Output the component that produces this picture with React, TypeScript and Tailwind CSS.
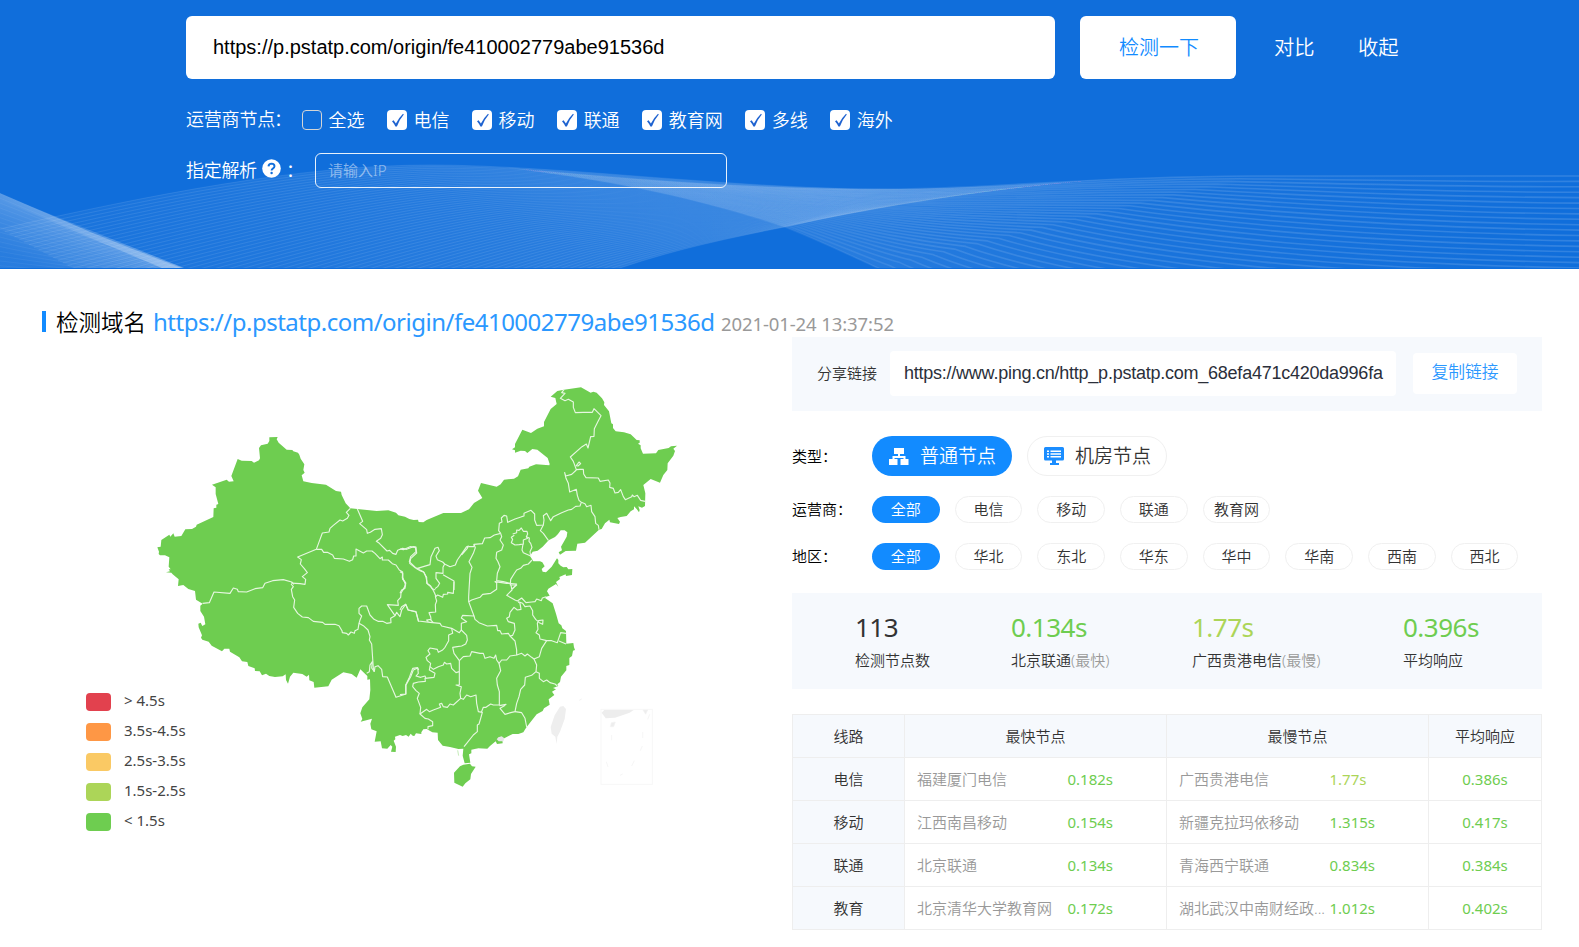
import React from "react";

type Pt = [number, number];
type Segment = { dx: number; dy: number; points: string };

const UI = "font-['Noto_Sans','Noto_Sans_CJK_SC',sans-serif]";
const ARIAL = "font-['Liberation_Sans','Noto_Sans_CJK_SC',sans-serif]";

/* ---------- header waves ---------- */

const sheetA: [Pt[], Pt[]] = [
  [[0, 229], [150, 195], [300, 165], [430, 165], [560, 165], [740, 190], [900, 189], [1000, 188], [1080, 180], [1130, 178]],
  [[300, 390], [450, 340], [560, 290], [620, 268], [680, 248], [730, 238], [785, 227], [870, 208], [1000, 185], [1130, 178]],
];
const sheetB: [Pt[], Pt[]] = [
  [[500, 167], [640, 180], [760, 190], [900, 189], [1000, 188], [1080, 177], [1250, 176], [1400, 176], [1500, 177], [1579, 176]],
  [[500, 167], [600, 178], [700, 198], [785, 227], [830, 245], [860, 260], [878, 268], [980, 320], [1200, 350], [1579, 360]],
];
const sheetC: [Pt[], Pt[]] = [
  [[-10, 189], [30, 206], [60, 219], [90, 232], [120, 244], [150, 256], [184, 269], [190, 272], [195, 274], [200, 276]],
  [[-10, 300], [10, 296], [30, 292], [60, 290], [90, 290], [120, 290], [150, 290], [170, 290], [190, 290], [200, 290]],
];

function mix([a, b]: [Pt[], Pt[]], t: number): Pt[] {
  return a.map((p, i) => [p[0] + (b[i][0] - p[0]) * t, p[1] + (b[i][1] - p[1]) * t] as Pt);
}
function curve(p: Pt[]): string {
  const s = p.map((q) => q[0].toFixed(1) + " " + q[1].toFixed(1));
  return `M${s[0]}C${s.slice(1).join(" ")}`;
}
function area([a, b]: [Pt[], Pt[]]): string {
  return curve(a) + "L" + curve([...b].reverse()).slice(1) + "Z";
}
function Lines({ sheet, n, stroke, w = 1 }: { sheet: [Pt[], Pt[]]; n: number; stroke: string; w?: number }) {
  return (
    <g fill="none" stroke={stroke} strokeWidth={w}>
      {Array.from({ length: n + 1 }, (_, i) => (
        <path key={i} d={curve(mix(sheet, i / n))} />
      ))}
    </g>
  );
}

function Waves() {
  return (
    <svg className="absolute inset-0" width="1579" height="268" viewBox="0 0 1579 268">
      <defs>
        <linearGradient id="ga" gradientUnits="userSpaceOnUse" x1="0" y1="0" x2="1130" y2="0">
          <stop offset="0" stopColor="#fff" stopOpacity="0.03" />
          <stop offset="0.35" stopColor="#fff" stopOpacity="0.08" />
          <stop offset="0.75" stopColor="#fff" stopOpacity="0.13" />
          <stop offset="1" stopColor="#fff" stopOpacity="0.04" />
        </linearGradient>
        <linearGradient id="gb" gradientUnits="userSpaceOnUse" x1="500" y1="0" x2="1579" y2="0">
          <stop offset="0" stopColor="#fff" stopOpacity="0.1" />
          <stop offset="0.3" stopColor="#fff" stopOpacity="0.1" />
          <stop offset="0.6" stopColor="#fff" stopOpacity="0.04" />
          <stop offset="1" stopColor="#fff" stopOpacity="0" />
        </linearGradient>
        <linearGradient id="gc" gradientUnits="userSpaceOnUse" x1="92" y1="231" x2="72" y2="281">
          <stop offset="0" stopColor="#fff" stopOpacity="0.3" />
          <stop offset="0.4" stopColor="#fff" stopOpacity="0.2" />
          <stop offset="1" stopColor="#fff" stopOpacity="0.1" />
        </linearGradient>
        <linearGradient id="gd" gradientUnits="userSpaceOnUse" x1="0" y1="0" x2="184" y2="0">
          <stop offset="0" stopColor="#fff" stopOpacity="0" />
          <stop offset="1" stopColor="#fff" stopOpacity="0.34" />
        </linearGradient>
        <linearGradient id="sa" gradientUnits="userSpaceOnUse" x1="0" y1="0" x2="1130" y2="0">
          <stop offset="0" stopColor="#fff" stopOpacity="0.09" />
          <stop offset="0.5" stopColor="#fff" stopOpacity="0.09" />
          <stop offset="0.68" stopColor="#fff" stopOpacity="0.05" />
          <stop offset="0.8" stopColor="#fff" stopOpacity="0.012" />
          <stop offset="1" stopColor="#fff" stopOpacity="0" />
        </linearGradient>
        <linearGradient id="sb" gradientUnits="userSpaceOnUse" x1="500" y1="0" x2="1579" y2="0">
          <stop offset="0" stopColor="#fff" stopOpacity="0" />
          <stop offset="0.12" stopColor="#fff" stopOpacity="0.015" />
          <stop offset="0.25" stopColor="#fff" stopOpacity="0.05" />
          <stop offset="0.4" stopColor="#fff" stopOpacity="0.11" />
          <stop offset="1" stopColor="#fff" stopOpacity="0.14" />
        </linearGradient>
      </defs>
      <path d={area(sheetA)} fill="url(#ga)" />
      <Lines sheet={sheetA} n={62} stroke="url(#sa)" />
      <path d={area(sheetB)} fill="url(#gb)" />
      <Lines sheet={sheetB} n={34} stroke="url(#sb)" w={1.6} />
      <path d={area(sheetC)} fill="url(#gc)" />
      <path d="M0 194L184 268H162L0 200Z" fill="url(#gd)" />
      <Lines sheet={sheetC} n={22} stroke="rgba(255,255,255,0.05)" />
    </svg>
  );
}

/* ---------- map ---------- */

const outline: Segment[] = [
  { dx: 0, dy: 0, points: "52,532 62,530 64,510 88,494 91,500 100,490 104,500 124,498 136,478 156,477 168,470 170,464 220,441 221,415 229,413 229,404 235,402 227,372 227,352 216,344 260,329 267,335 281,334 274,318 293,267 305,272 335,273 342,278 357,271 360,265 357,234 363,226 383,221 388,213 388,202 413,201 410,208 416,218 440,239 457,240 460,244 474,248 478,254 482,266 493,283 490,300 494,308 485,316 490,334 515,339 558,344 588,363 603,365 605,375 617,400 631,415 652,417 710,423 745,421 768,428 775,436 795,440" },
  { dx: 780, dy: 0, points: "28,447 41,450 54,449 56,456 70,457 80,450 130,429 183,429 207,418 222,399 247,384 234,362 243,339 290,350 302,343 312,329 342,326 354,319 362,299 385,295 388,290 408,283 448,286 449,282 443,264 412,239 397,237 382,249 375,243 362,242 345,248 345,241 336,238 345,232 345,222 367,179 393,189 412,176 432,169 432,156 452,117 470,102 466,84 452,80 472,63 492,59 543,52 572,68 580,65 590,68 606,85 613,97 612,105 627,124 634,160 639,163 639,174 647,184 672,187 692,193 710,210 719,211 719,218 714,221 722,226 722,235 729,251 768,250 775,240 806,234 813,229 831,227 820,236 825,243 820,257 803,280 802,300 790,315 780,338 752,327 730,345 736,370 735,408 726,413 715,409 719,420 717,427 710,417 702,409 702,418 692,424 680,438 662,441 652,444 660,455 657,462 630,457 628,449 615,460 605,477 597,479 555,518 532,521 528,542 497,543 480,554 476,547 486,541 483,530 500,500 502,487 494,481 482,481 474,492 465,501 446,511 428,530 413,542 398,545 390,558 400,574 420,574 427,577 434,589 425,597 428,605 438,607 455,590 471,565 475,570 475,580 482,587 490,592 500,591 505,598 517,597 516,615 498,618 497,613 478,621 480,627 468,636 475,650 468,642 445,656" },
  { dx: 780, dy: 600, points: "441,64 449,77 438,80 435,84 458,100 468,131 476,160 484,166 487,175 498,183 499,221 520,219 522,232 525,240 519,242 516,258 508,264 508,285 499,288 499,301 483,320 480,336 472,343 475,348 459,354 468,358 456,365 463,375 446,388 449,404 432,415 428,423 410,433 380,471 376,477 370,487 355,492 338,492 320,501 307,508 308,520 291,522 287,514 270,528 262,536 235,535 214,539 214,550 207,553 211,578 194,580 188,557 190,536 175,537 150,531 128,527 114,510 113,488 97,487 80,477 70,478 64,487 64,492 48,490 43,498 38,497 32,491 26,500 18,495 8,498" },
  { dx: 0, dy: 600, points: "780,495 765,500 766,508 761,512 768,530 767,546 753,545 757,530 752,525 742,536 726,535 722,514 704,515 710,484 694,478 691,461 696,446 662,455 667,447 661,430 667,412 688,388 691,360 690,328 682,329 682,318 661,298 650,323 635,312 610,307 575,329 565,349 523,353 521,336 508,331 507,314 500,320 487,312 460,308 450,320 444,341 438,330 437,313 428,319 405,321 388,318 378,311 366,316 359,304 345,303 344,295 325,288 322,276 306,274 298,262 270,245 268,236 253,236 246,244 215,227 206,215 187,209 183,203 186,196 176,172 175,161 182,158 187,168 196,163 192,140 181,123 181,107 188,101 168,89 165,63 145,57 130,45 114,48 116,28 98,13 94,8 78,7 90,4 86,-2" },
  { dx: 0, dy: 0, points: "92,598 86,590 88,562 75,556 60,556 56,552 57,545" },
];

function join(segments: Segment[]): string {
  return segments
    .flatMap((s) => s.points.split(" ").map((p) => {
      const [x, y] = p.split(",").map(Number);
      return `${x + s.dx},${y + s.dy}`;
    }))
    .join(" ");
}

const borders: { shift: string; lines: string[] }[] = [
  {
    shift: "translate(0 0)",
    lines: [
      "631,415 619,427 627,436 622,445 608,453 600,450 580,466 570,475 567,486 547,489 540,508 529,538 473,561 484,569 481,582 493,596 502,608 487,620 497,628 495,643 480,641 467,640 453,639",
      "529,538 545,538 551,547 562,547 578,555 583,565 610,567 628,574 638,569 641,558 648,558 648,537 670,549 680,543 696,543 705,550 720,566 727,561 727,570 745,570 757,581 768,585 778,600 788,606 787,624 797,640 794,652 790,660",
      "652,417 668,454 659,461 680,479 682,490 691,487 705,478 724,476 727,494 722,505 709,514 718,520 741,543 749,541 758,550 768,553 773,541 788,535 800,538 820,530 828,531 830,549 812,566 809,580 825,593 840,598",
    ],
  },
  {
    shift: "translate(780 0)",
    lines: [
      "0,537 10,539 30,530 46,532 48,545 32,560 28,575 50,596 62,603 72,607 78,622 82,640 92,648 97,656 106,660",
      "50,596 90,584 93,560 105,535 114,532 118,542 108,558 112,569 128,576 134,582 150,590 166,585 172,570 200,530 205,528 202,535 185,555",
      "205,530 222,530 222,523 247,521 254,504 270,503 283,495 302,490",
      "134,582 129,592 129,610 108,608 108,625 119,640 113,650 105,656",
      "129,614 162,633 162,660",
      "222,523 226,533 220,550 207,575 216,592 210,610 207,660",
      "302,490 296,482 298,460 306,456 304,444 312,436 320,438 323,457 345,447 365,440 372,438 372,430 393,421 404,432 404,450 410,466 430,465 432,450 430,437 440,430 452,452 460,440 485,428 505,420 515,418 527,409 540,408 544,397 537,391 532,376 529,358 509,366 505,340 498,325 494,308 497,318 515,313 529,300",
      "302,490 305,500 300,510 310,525 305,540 290,547 288,565 294,575 300,590 292,610 290,632 310,635 330,640",
      "430,465 421,482 430,490 445,511",
      "396,570 385,582 370,586 362,595 350,600 342,612 332,628 331,645 350,645 338,655",
      "338,492 350,488 350,480 357,481 364,474 370,484 381,484 383,492 379,500 383,505 370,510 370,522 358,524 345,525 334,518 338,508 334,502 343,496",
      "379,500 388,504 387,514 392,520 396,532 390,545 392,558 370,548 366,540 369,522",
      "492,59 485,68 495,70 481,85 495,92 505,88 520,96 520,112 526,128 550,127 577,127 582,116 603,137 595,152 583,176 582,199 572,200 564,234 559,222 546,230 511,261 520,274 529,299 540,298 550,298 551,312 558,323 595,324 600,334 625,330 630,339 629,352 640,355 645,369 655,367 662,359 670,380 676,389 695,380 697,375 702,380 712,376 722,391 735,394",
      "529,287 537,276 542,281 534,288 527,287",
      "544,397 555,401 560,410 573,406 575,425 585,440 587,460 595,466 597,479",
    ],
  },
  {
    shift: "translate(0 600)",
    lines: [
      "188,100 208,98 222,66 270,70 280,54 292,58 295,65 320,66 345,56 368,53 375,40 398,32 430,29 455,36 462,43",
      "453,42 460,50 454,58 458,80 464,90 461,112 473,130 487,141 505,143 520,154 548,157 555,163 585,163 597,167 606,182 607,188 620,190 625,195 633,186 643,190 645,182 654,178 657,160 670,167 684,180 690,200 688,210 695,222 700,295 703,305",
      "657,160 660,150 665,138 657,130 657,115 665,108 680,108 690,135 702,148 714,154 728,154 740,160 753,158 752,145 765,137 742,104 775,106 773,92 782,82 783,70 797,45 788,22 788,10",
      "765,137 770,127 780,140 785,120 797,103 805,120 828,126 836,155",
      "703,305 705,290 714,287 725,298 728,320 742,321 768,382 798,372 798,345 812,320 820,300 833,294 836,300",
      "703,305 695,294 697,275 690,285 688,305 680,310",
    ],
  },
  {
    shift: "translate(780 600)",
    lines: [
      "0,5 8,10 8,28 17,38 15,55 5,60 0,70",
      "0,120 5,110 17,103 24,120 48,125 55,153 90,157 120,160 125,168 155,175 178,188 184,180 200,196 202,210 197,222 185,228 172,230 158,232 162,250 178,272 178,345",
      "85,155 80,150 93,148 92,140 87,128 107,126 106,104 110,93 106,80 113,75 128,82 130,73 143,72 143,67 160,70 162,35",
      "60,0 70,5 80,22 80,40 90,48 98,58 104,70 108,80",
      "92,150 100,158",
      "207,60 206,80 206,95 222,138 188,136 184,144 200,155 184,160 184,182",
      "206,95 215,90 240,82 248,73 272,70 290,58 290,38 285,35 320,40 350,42 336,58 333,46 336,60 320,76 345,90 352,93 365,84 378,98 395,96 405,95 410,87 424,92 427,84 438,80",
      "222,138 225,148 237,158 262,168 290,166 293,182 300,182 305,192 325,190 330,198 338,196 345,180 343,160 325,155 320,145 328,140 330,127 342,112 352,120 363,118 360,100 354,95",
      "355,95 368,100 375,110 390,108 398,122 398,135 407,148 418,158 428,163 429,150 415,152 412,160 414,178 408,188 418,195 420,207 440,212 455,212 472,218 482,188 498,190",
      "477,213 498,222",
      "330,198 345,213 350,240 350,255 330,258 320,270 305,270 297,280",
      "350,255 365,250 375,258 382,252 395,262 402,267 418,260 425,235 440,212",
      "402,267 410,285 408,305 395,316 376,322 374,345 362,358 357,380 350,400 345,425 332,428 315,433 300,415 312,408 318,403 298,407",
      "408,305 418,310 418,325 430,335 440,330 450,338 465,342 472,348",
      "345,425 365,428 375,445 380,471",
      "178,272 190,260 210,258 215,245 240,250 250,250 255,265 270,260 282,265 287,255 290,270 297,280 302,302 290,325 292,345 298,365 298,405 280,405 272,402 258,412 250,412 244,427",
      "155,175 158,190 146,195 146,212 135,232 128,240 115,247 112,238 90,234 84,242 90,252 78,262 82,272 92,280 90,290 100,298 115,290 130,285 133,277 140,282 152,280 155,295 168,308 178,305",
      "90,290 88,300 105,310 102,322 75,325 76,334 55,336 40,340 38,350 48,362 58,370 52,385 62,412 60,432",
      "0,374 17,372 17,345 27,325 38,295 53,293 55,310 48,318 62,322 75,318 78,326",
      "178,345 168,345 184,350 180,370 182,385 190,388 200,375 212,380 228,375 230,400 235,425 247,427 242,445 237,462 232,465 232,485 220,495 200,520 192,530",
      "182,385 160,405 150,402 142,412 130,410 125,400 118,402 122,412 100,420 88,425 80,418 60,432 75,445 85,447 98,455 98,467 84,470 84,478",
    ],
  },
];

function ChinaMap() {
  return (
    <svg width="550" height="430" viewBox="0 0 1650 1290" className="ml-[140px] mt-[34px] [grid-area:1/1]">
      <polygon points={join(outline)} fill="#6ecd50" />
      <g transform="translate(780 600)">
        <polygon fill="#6ecd50" points="180,589 190,584 210,581 216,589 227,590 213,612 211,628 196,640 188,650 163,638 162,608" />
        <path d="M173 541l3 16" stroke="#c5ecb9" strokeWidth="3" />
        <path d="M295 502l10-3 8 6-3 9-14 0-6-6z" fill="#e6e6e6" />
        <path d="M480 410l10-2 8 9-4 30-14 38-8 15-2 22-4-22-11-9-3-20 12-35z" fill="#eee" />
        <path d="M538 391l7-4" stroke="#f3f3f3" strokeWidth="3" />
        <rect x="603" y="418" width="154" height="225" fill="none" stroke="#f7f7f7" strokeWidth="3" />
        <path d="M605 428l8-8h88l-12 8-44 15-28 2z" fill="#ededed" />
        <path d="M729 420h14l-6 13zM631 470l3-12 12-2-5 14zM728 486v18" fill="#ededed" stroke="#f3f3f3" strokeWidth="2" />
        <path d="M749 433l-6 15M727 528l-6 14M703 572l-8 16M668 612l-8 4M619 575l5 16M635 495v16" stroke="#f6f6f6" strokeWidth="3" />
      </g>
      <g fill="none" stroke="#e6f7e0" strokeWidth="3.4" strokeLinejoin="round">
        {borders.map((b) => (
          <g key={b.shift} transform={b.shift}>
            {b.lines.map((l) => (
              <polyline key={l} points={l} />
            ))}
          </g>
        ))}
      </g>
    </svg>
  );
}

/* ---------- small parts ---------- */

const legend = [
  { color: "bg-[#e2414e]", label: "> 4.5s" },
  { color: "bg-[#fe9745]", label: "3.5s-4.5s" },
  { color: "bg-[#fac964]", label: "2.5s-3.5s" },
  { color: "bg-[#acd558]", label: "1.5s-2.5s" },
  { color: "bg-[#6ecd50]", label: "< 1.5s" },
];

const carriers = [
  { name: "全选", on: false },
  { name: "电信", on: true },
  { name: "移动", on: true },
  { name: "联通", on: true },
  { name: "教育网", on: true },
  { name: "多线", on: true },
  { name: "海外", on: true },
];

function CheckBox({ on }: { on: boolean }) {
  return on ? (
    <span className="flex size-5 items-center justify-center rounded-[4px] bg-white">
      <svg width="20" height="20" viewBox="0 0 20 20">
        <path d="M5 11.2L6.6 10.2L8.9 13.4Q11.4 8.4 16 3.8L16.8 4.6Q12.4 9.6 9.9 16.6H8.4Q7 13.4 5 11.2Z" fill="#1f63d0" />
      </svg>
    </span>
  ) : (
    <span className="size-5 rounded-[4px] border border-[#d5d5d5]" />
  );
}

function Pill({ text, active }: { text: string; active?: boolean }) {
  return (
    <span
      className={
        active
          ? "flex h-[27px] w-[67.6px] items-center justify-center rounded-full bg-[#128bff] text-white"
          : "flex h-[27px] w-[67.6px] items-center justify-center rounded-full border border-[#f0f0f0] text-[#333]"
      }
    >
      {text}
    </span>
  );
}

function Label({ text }: { text: string }) {
  return (
    <span className="w-[80px]">
      {text}
      <span>：</span>
    </span>
  );
}

function FilterRow({ label, items, className }: { label: string; items: string[]; className: string }) {
  return (
    <div className={"flex h-[27px] items-center text-[15px] text-black " + className}>
      <Label text={label} />
      <div className="flex gap-[15.1px]">
        {items.map((t, i) => (
          <Pill key={t} text={t} active={i === 0} />
        ))}
      </div>
    </div>
  );
}

const stats = [
  { value: "113", color: "text-[#333]", label: "检测节点数", note: "", w: "w-[156px]" },
  { value: "0.134s", color: "text-[#6ecd50]", label: "北京联通", note: "(最快)", w: "w-[181px]" },
  { value: "1.77s", color: "text-[#acd558]", label: "广西贵港电信", note: "(最慢)", w: "w-[211px]" },
  { value: "0.396s", color: "text-[#6ecd50]", label: "平均响应", note: "", w: "w-[100px]" },
];

const rows = [
  { line: "电信", fast: "福建厦门电信", ft: "0.182s", slow: "广西贵港电信", st: "1.77s", warm: true, avg: "0.386s" },
  { line: "移动", fast: "江西南昌移动", ft: "0.154s", slow: "新疆克拉玛依移动", st: "1.315s", warm: false, avg: "0.417s" },
  { line: "联通", fast: "北京联通", ft: "0.134s", slow: "青海西宁联通", st: "0.834s", warm: false, avg: "0.384s" },
  { line: "教育", fast: "北京清华大学教育网", ft: "0.172s", slow: "湖北武汉中南财经政...", st: "1.012s", warm: false, avg: "0.402s" },
];

const GRID = "grid h-[43px] grid-cols-[112px_262px_262px_113px] border-b border-[#eee]";

export default function App() {
  return (
    <div className={"h-[947px] w-[1579px] overflow-hidden bg-white font-[350] " + UI}>
      <header className="relative h-[269px] overflow-hidden bg-[#106edb] pl-[186px] pt-[16px] text-white">
        <Waves />
        <div className="relative flex h-[63px] items-center text-[20px]">
          <div className={"flex h-full w-[869px] items-center rounded-[6px] bg-white pb-[2px] pl-[27px] font-normal text-black " + ARIAL}>
            https://p.pstatp.com/origin/fe410002779abe91536d
          </div>
          <div className="ml-[25px] flex h-full w-[156px] items-center justify-center rounded-[6px] bg-white pl-[2px] text-[#128bff]">检测一下</div>
          <span className="ml-[38px] text-[20.3px]">对比</span>
          <span className="ml-[43.5px] text-[20.3px]">收起</span>
        </div>
        <div className="relative mt-[29px] flex h-[24px] items-center text-[18px]">
          <span className="w-[116px] whitespace-nowrap pb-[2px] tracking-[-0.2px]">
            运营商节点<span className="-ml-px">：</span>
          </span>
          <div className="flex gap-[22.7px]">
            {carriers.map((c) => (
              <span key={c.name} className="flex items-center gap-[6.4px]">
                <CheckBox on={c.on} />
                <span className="pb-px leading-[24px]">{c.name}</span>
              </span>
            ))}
          </div>
        </div>
        <div className="relative mt-[21px] flex h-[35px] items-center text-[18px]">
          <span className="w-[72px] tracking-[-0.3px]">指定解析</span>
          <svg className="mb-[4px] ml-[4px]" width="19" height="19" viewBox="0 0 19 19">
            <circle cx="9.5" cy="9.5" r="9.3" fill="#fff" />
            <path d="M6.5 7.4Q6.6 4.6 9.6 4.6Q12.5 4.7 12.5 7.2Q12.5 8.6 10.8 9.6Q9.6 10.3 9.6 11.6" fill="none" stroke="#106edb" strokeWidth="1.9" />
            <circle cx="9.6" cy="14" r="1.2" fill="#106edb" />
          </svg>
          <span className="ml-[5px] w-[29px]">：</span>
          <div className="flex h-full w-[412px] items-center rounded-[6px] border border-white/90 pl-[12px] text-[15px] text-white/50">请输入IP</div>
        </div>
      </header>

      <div className="flex h-[70px] items-end">
        <div className="ml-[42px] flex items-center">
          <span className="mb-[3px] h-[21px] w-[4px] bg-[#128bff]" />
          <span className="ml-[10px] text-[22.5px] leading-[30px] text-black">检测域名</span>
          <span className="ml-[7px] flex items-baseline whitespace-nowrap font-normal leading-[30px]">
            <span className="w-[568px] text-[24px] tracking-[-0.5px] text-[#2b98ff]">https://p.pstatp.com/origin/fe410002779abe91536d</span>
            <span className="text-[18.5px] tracking-[-0.1px] text-[#999]">2021-01-24 13:37:52</span>
          </span>
        </div>
      </div>

      <main className="-mt-[3px] flex">
        <section className="grid w-[792px] items-start">
          <ChinaMap />
          <div className="ml-[86px] mt-[349px] flex flex-col [grid-area:1/1]">
            {legend.map((l) => (
              <div key={l.label} className="flex h-[30px] items-center">
                <span className={"mt-[3px] h-[18px] w-[25px] rounded-[4px] " + l.color} />
                <span className="ml-[13px] text-[15px] font-normal text-[#444]">{l.label}</span>
              </div>
            ))}
          </div>
        </section>

        <section className="w-[750px] pt-px">
          <div className="flex h-[74px] items-center bg-[#f6f9fd] pb-[2px] pl-[25px]">
            <span className="w-[73px] text-[15px] text-[#333]">分享链接</span>
            <div className={"flex h-[45px] w-[506px] items-center rounded-[4px] bg-white pl-[14px] text-[18px] font-normal tracking-[-0.24px] text-[#2b2f3a] " + ARIAL}>
              https://www.ping.cn/http_p.pstatp.com_68efa471c420da996fa
            </div>
            <div className="ml-[17px] flex h-[41px] w-[104px] items-center justify-center rounded-[4px] bg-white pb-[2px] text-[16.8px] text-[#2b98ff]">复制链接</div>
          </div>

          <div className="mt-[25px] flex h-[40px] items-center text-[15px] text-black">
            <Label text="类型" />
            <div className="flex h-[40px] w-[140px] items-center rounded-full bg-[#128bff] pl-[17px] text-[19px] text-white">
              <svg width="20" height="17" viewBox="0 0 20 17" fill="#fff">
                <path d="M5 0H15V6H11V8H16.5V11H19.5V17H11.5V11H14.5V10H5.5V11H8.5V17H0V11H3.5V8H9V6H5Z" />
              </svg>
              <span className="ml-[11px]">普通节点</span>
            </div>
            <div className="ml-[15px] flex h-[40px] w-[140px] items-center rounded-full border border-[#f0f0f0] pl-[16px] text-[19px] text-[#333]">
              <svg width="20" height="18" viewBox="0 0 20 18">
                <path d="M1.5 0H18.5Q20 0 20 1.5V12Q20 13.5 18.5 13.5H12V16H15V18H6V16H8V13.5H1.5Q0 13.5 0 12V1.5Q0 0 1.5 0Z" fill="#1b8dff" />
                <path d="M3 4.2H5M6.5 4.2H17M3 7H5M6.5 7H17M3 9.8H5M6.5 9.8H17" stroke="#fff" strokeWidth="1.4" />
              </svg>
              <span className="ml-[11px]">机房节点</span>
            </div>
          </div>

          <FilterRow className="mt-[20px]" label="运营商" items={["全部", "电信", "移动", "联通", "教育网"]} />
          <FilterRow className="mt-[20px]" label="地区" items={["全部", "华北", "东北", "华东", "华中", "华南", "西南", "西北"]} />

          <div className="mt-[23px] flex h-[96px] bg-[#f6f9fd] pl-[63px] pt-[16px]">
            {stats.map((s) => (
              <div key={s.label} className={s.w}>
                <div className={"text-[26px] font-normal leading-[36px] tracking-[-0.5px] " + s.color}>{s.value}</div>
                <div className="mt-[3px] whitespace-nowrap text-[15px] leading-[24px] text-[#333]">
                  {s.label}
                  <span className="text-[#999]">{s.note}</span>
                </div>
              </div>
            ))}
          </div>

          <div className="mt-[25px] border-l border-t border-[#eee] text-[15px] text-[#333]">
            <div className={GRID + " bg-[#f6f9fd]"}>
              {["线路", "最快节点", "最慢节点", "平均响应"].map((h) => (
                <div key={h} className="flex items-center justify-center border-r border-[#eee]">{h}</div>
              ))}
            </div>
            {rows.map((r) => (
              <div key={r.line} className={GRID}>
                <div className="flex items-center justify-center border-r border-[#eee] bg-[#f6f9fd]">{r.line}</div>
                <div className="flex items-center border-r border-[#eee] pl-[12px]">
                  <span className="w-[150.5px] whitespace-nowrap text-[#999]">{r.fast}</span>
                  <span className="font-normal text-[#6ecd50]">{r.ft}</span>
                </div>
                <div className="flex items-center border-r border-[#eee] pl-[12px]">
                  <span className="w-[150.5px] whitespace-nowrap text-[#999]">{r.slow}</span>
                  <span className={r.warm ? "font-normal text-[#acd558]" : "font-normal text-[#6ecd50]"}>{r.st}</span>
                </div>
                <div className="flex items-center justify-center border-r border-[#eee] font-normal text-[#6ecd50]">{r.avg}</div>
              </div>
            ))}
          </div>
        </section>
      </main>
    </div>
  );
}
